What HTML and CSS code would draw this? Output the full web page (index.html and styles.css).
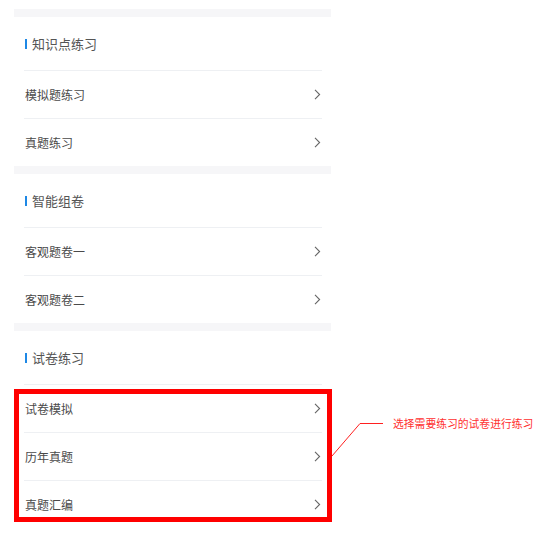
FILE: index.html
```html
<!DOCTYPE html>
<html lang="zh">
<head>
<meta charset="utf-8">
<link rel="stylesheet" href="styles.css">
</head>
<body>
<div class="page">
  <div class="panel">
    <div class="band"></div>
    <div class="section">
      <div class="head"><span class="bar"></span>知识点练习</div>
      <div class="row"><span>模拟题练习</span><svg class="chev" width="7" height="11" viewBox="0 0 7 11"><path d="M1 0.8 L5.6 5.5 L1 10.2" fill="none" stroke="#666" stroke-width="1.1"/></svg></div>
      <div class="row"><span>真题练习</span><svg class="chev" width="7" height="11" viewBox="0 0 7 11"><path d="M1 0.8 L5.6 5.5 L1 10.2" fill="none" stroke="#666" stroke-width="1.1"/></svg></div>
    </div>
    <div class="band"></div>
    <div class="section">
      <div class="head"><span class="bar"></span>智能组卷</div>
      <div class="row"><span>客观题卷一</span><svg class="chev" width="7" height="11" viewBox="0 0 7 11"><path d="M1 0.8 L5.6 5.5 L1 10.2" fill="none" stroke="#666" stroke-width="1.1"/></svg></div>
      <div class="row"><span>客观题卷二</span><svg class="chev" width="7" height="11" viewBox="0 0 7 11"><path d="M1 0.8 L5.6 5.5 L1 10.2" fill="none" stroke="#666" stroke-width="1.1"/></svg></div>
    </div>
    <div class="band"></div>
    <div class="section">
      <div class="head"><span class="bar"></span>试卷练习</div>
      <div class="row"><span>试卷模拟</span><svg class="chev" width="7" height="11" viewBox="0 0 7 11"><path d="M1 0.8 L5.6 5.5 L1 10.2" fill="none" stroke="#666" stroke-width="1.1"/></svg></div>
      <div class="row"><span>历年真题</span><svg class="chev" width="7" height="11" viewBox="0 0 7 11"><path d="M1 0.8 L5.6 5.5 L1 10.2" fill="none" stroke="#666" stroke-width="1.1"/></svg></div>
      <div class="row"><span>真题汇编</span><svg class="chev" width="7" height="11" viewBox="0 0 7 11"><path d="M1 0.8 L5.6 5.5 L1 10.2" fill="none" stroke="#666" stroke-width="1.1"/></svg></div>
    </div>
  </div>
  <div class="hl-box"></div>
  <svg class="hl-line" width="60" height="40" viewBox="0 0 60 40"><path d="M0 36 L28 3.5 L51 3.5" fill="none" stroke="#ff2020" stroke-width="1"/></svg>
  <div class="hl-note">选择需要练习的试卷进行练习</div>
</div>
</body>
</html>
```
FILE: styles.css
```css
html, body {
  margin: 0;
  padding: 0;
  background: #ffffff;
}
body {
  font-family: "Noto Sans CJK SC", "Noto Sans", sans-serif;
}
*, *::before, *::after {
  box-sizing: border-box;
}
.page {
  position: relative;
  width: 554px;
  height: 533px;
  padding: 9px 0 0 14px;
}
.panel {
  width: 317px;
  background: #fff;
}
.band {
  height: 8px;
  background: #f6f6f8;
}
.section {
  padding: 0 9px 0 10px;
}
.head {
  height: 54px;
  display: flex;
  align-items: center;
  font-size: 13px;
  color: #555;
  border-bottom: 1px solid #eef0f3;
  padding-left: 1px;
}
.bar {
  width: 2px;
  height: 10px;
  background: #1e88e5;
  margin-right: 5px;
}
.row {
  height: 48px;
  display: flex;
  align-items: center;
  justify-content: space-between;
  font-size: 12px;
  color: #4a4a4a;
  border-bottom: 1px solid #eef0f3;
  padding-left: 1px;
}
.row:last-child {
  border-bottom: none;
  height: 47px;
}
.chev {
  margin-right: 1px;
}
.hl-box {
  position: absolute;
  left: 14px;
  top: 389px;
  width: 318px;
  height: 133px;
  border: 5px solid #ff0000;
}
.hl-line {
  position: absolute;
  left: 332px;
  top: 420px;
}
.hl-note {
  position: absolute;
  left: 393px;
  top: 415px;
  font-size: 10.8px;
  line-height: 16px;
  color: #ff3030;
  white-space: nowrap;
}
```
